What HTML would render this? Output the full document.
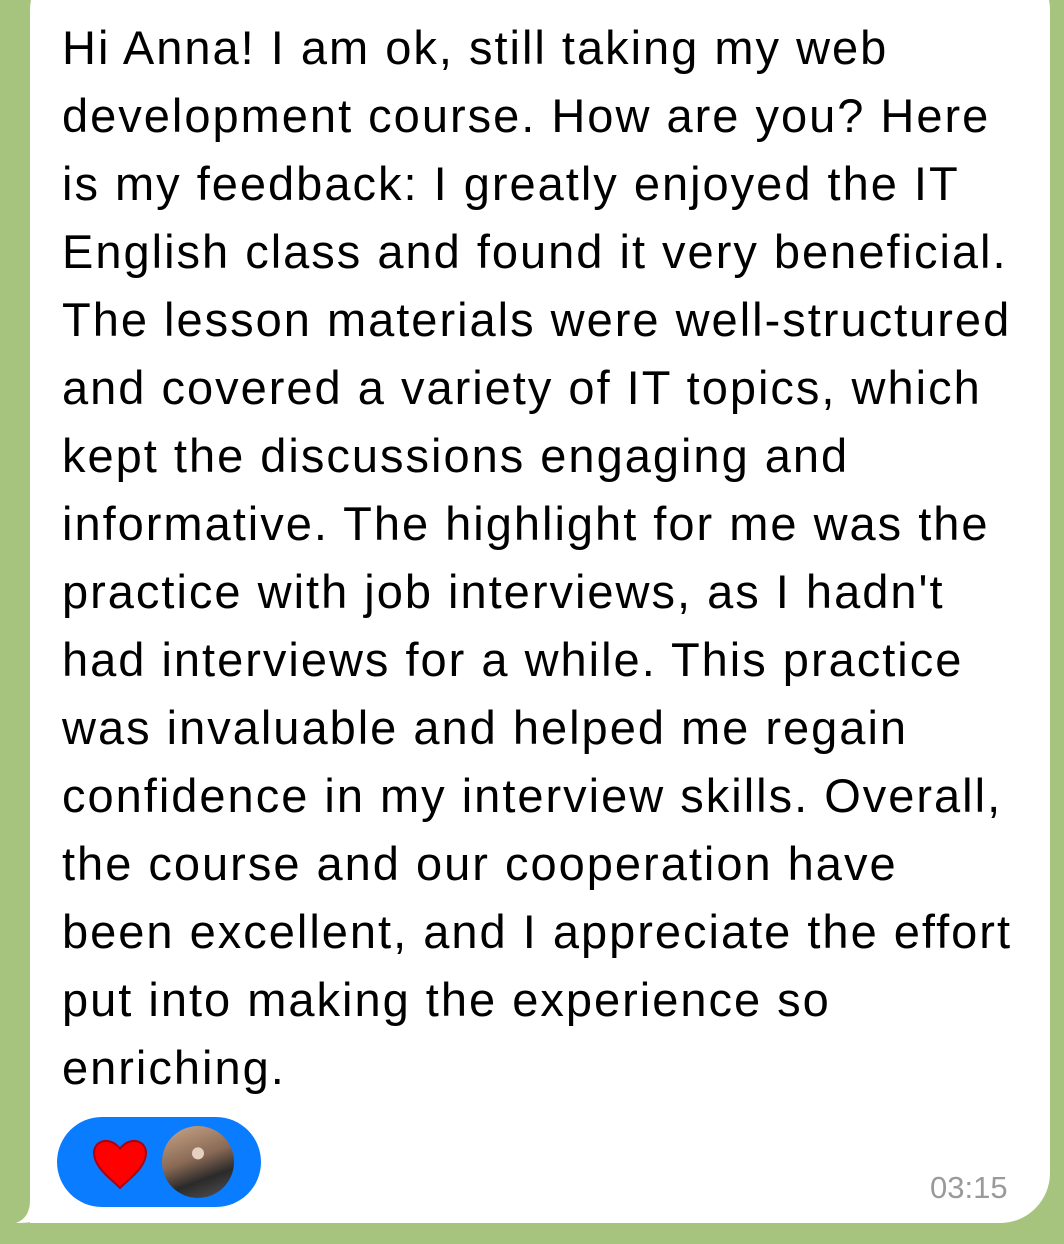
<!DOCTYPE html>
<html><head><meta charset="utf-8"><style>
html,body{margin:0;padding:0}
body{width:1064px;height:1244px;background:#a7c47e;position:relative;overflow:hidden;font-family:"Liberation Sans",Arial,sans-serif}
.bubble{position:absolute;left:30px;top:-40px;width:1020px;height:1263px;background:#fff;border-radius:50px 50px 50px 0}
.tail{position:absolute;left:14px;top:1180px;width:40px;height:43px}
.txt{position:absolute;left:62px;top:14px;font-size:47px;letter-spacing:2px;line-height:68px;color:#000;white-space:nowrap}
.pill{position:absolute;left:57px;top:1117px;width:204px;height:90px;border-radius:45px;background:#0a7cff}
.av{position:absolute;left:162px;top:1126px;width:72px;height:72px;border-radius:50%;background:radial-gradient(circle at 50% 38%,#e6d0c0 0 10%,transparent 11%),linear-gradient(160deg,#c9a78a 0%,#8a6a55 45%,#2a2a2a 70%,#555 100%)}
.time{position:absolute;left:930px;top:1170px;font-size:31px;color:#9a9a9a}
</style></head><body>
<div class="bubble"></div>
<svg class="tail" viewBox="0 0 40 43"><path d="M16 0 L16 20 Q16 38 2 43 Q24 43 40 36 L40 0 Z" fill="#fff"/></svg>
<div class="txt">Hi Anna! I am ok, still taking my web<br>development course. How are you? Here<br>is my feedback: I greatly enjoyed the IT<br>English class and found it very beneficial.<br>The lesson materials were well-structured<br>and covered a variety of IT topics, which<br>kept the discussions engaging and<br>informative. The highlight for me was the<br>practice with job interviews, as I hadn't<br>had interviews for a while. This practice<br>was invaluable and helped me regain<br>confidence in my interview skills. Overall,<br>the course and our cooperation have<br>been excellent, and I appreciate the effort<br>put into making the experience so<br>enriching.</div>
<div class="pill"></div>
<svg style="position:absolute;left:90px;top:1134px" width="60" height="58" viewBox="0 0 56 56"><path d="M28 52 C20 44 2 32 3 17 C4 6 18 2 28 14 C38 2 52 6 53 17 C54 32 36 44 28 52 Z" fill="#f00" stroke="#b00010" stroke-width="2"/></svg>
<div class="av"></div>
<div class="time">03:15</div>
</body></html>
